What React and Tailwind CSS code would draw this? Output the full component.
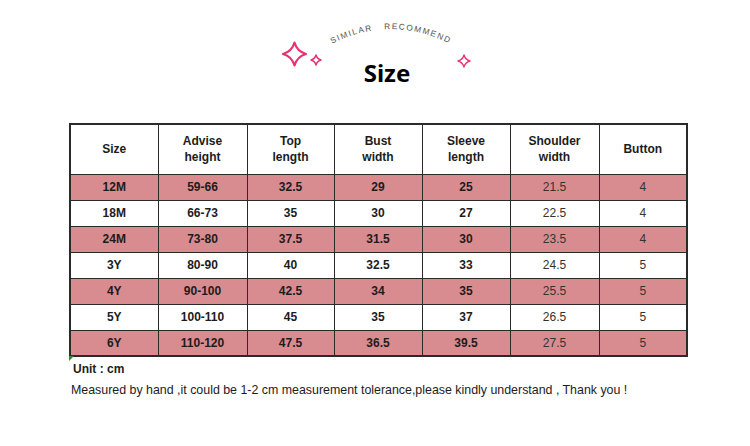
import React from "react";

const rows = [
  ["12M", "59-66", "32.5", "29", "25", "21.5", "4"],
  ["18M", "66-73", "35", "30", "27", "22.5", "4"],
  ["24M", "73-80", "37.5", "31.5", "30", "23.5", "4"],
  ["3Y", "80-90", "40", "32.5", "33", "24.5", "5"],
  ["4Y", "90-100", "42.5", "34", "35", "25.5", "5"],
  ["5Y", "100-110", "45", "35", "37", "26.5", "5"],
  ["6Y", "110-120", "47.5", "36.5", "39.5", "27.5", "5"],
];

const headers = [
  ["Size"],
  ["Advise", "height"],
  ["Top", "length"],
  ["Bust", "width"],
  ["Sleeve", "length"],
  ["Shoulder", "width"],
  ["Button"],
];

const colW = ["w-[88px]", "w-[89px]", "w-[87px]", "w-[88px]", "w-[88px]", "w-[89px]", "w-[88px]"];

function Sparkle({ cx, cy, r, sw }) {
  const k = r * 0.22;
  const d = `M ${cx} ${cy - r} Q ${cx + k} ${cy - k} ${cx + r} ${cy} Q ${cx + k} ${cy + k} ${cx} ${cy + r} Q ${cx - k} ${cy + k} ${cx - r} ${cy} Q ${cx - k} ${cy - k} ${cx} ${cy - r} Z`;
  return <path d={d} fill="none" stroke="#e8336f" strokeWidth={sw} strokeLinejoin="round" />;
}

export default function App() {
  return (
    <div className="w-[750px] h-[446px] bg-white overflow-hidden" style={{ fontFamily: '"Liberation Sans", Arial, sans-serif' }}>
      <div className="relative h-[123px]">
        <svg className="absolute inset-0" width="750" height="123" viewBox="0 0 750 123">
          <defs>
            <path id="arc" d="M 326 47 Q 391 11 456 47" fill="none" />
          </defs>
          <text fontSize="8.2" fill="#505050" letterSpacing="1.5" fontFamily='"Liberation Sans", Arial, sans-serif'>
            <textPath href="#arc" startOffset="50%" textAnchor="middle" xmlSpace="preserve">SIMILAR   RECOMMEND</textPath>
          </text>
          <Sparkle cx={294.5} cy={54} r={11.5} sw={2.2} />
          <Sparkle cx={316} cy={60} r={5} sw={1.5} />
          <Sparkle cx={464} cy={61} r={6} sw={1.3} />
        </svg>
        <div className="relative pt-[57px] pl-[24px] text-center text-[24px] font-bold text-black leading-[32px]" style={{ fontFamily: '"Noto Sans", sans-serif' }}>
          Size
        </div>
      </div>

      <div className="relative ml-[69px] w-[618px]">
        <table className="border-collapse border-2 border-[#2a2a2a] table-fixed w-[618px] text-[12px] text-[#1c1c1c]">
          <thead>
            <tr className="h-[50px] bg-white">
              {headers.map((h, i) => (
                <th key={i} className={`${colW[i]} border border-[#2a2a2a] font-bold leading-[16px] text-center align-middle p-0`}>
                  {h.map((l, j) => (
                    <div key={j}>{l}</div>
                  ))}
                </th>
              ))}
            </tr>
          </thead>
          <tbody>
            {rows.map((r, ri) => (
              <tr key={ri} className={`h-[26px] ${ri % 2 === 0 ? "bg-[#d98c90]" : "bg-white"}`}>
                {r.map((c, ci) => (
                  <td
                    key={ci}
                    className={`border border-[#2a2a2a] text-center align-middle p-0 leading-[14px] ${ci < 5 ? "font-bold" : "font-normal text-[#333]"}`}
                  >
                    {c}
                  </td>
                ))}
              </tr>
            ))}
          </tbody>
        </table>
        <svg className="absolute left-0 bottom-[-5px]" width="6" height="6" viewBox="0 0 6 6">
          <path d="M0 0 L5 0 L0 5 Z" fill="#2e8b2e" />
        </svg>
      </div>

      <div className="pl-[73px] pt-[4px] text-[12px] font-bold text-[#1c1c1c] leading-[16px]">Unit : cm</div>
      <div className="pl-[71px] pt-[5px] text-[12.4px] text-[#1c1c1c] leading-[16px]">
        Measured by hand ,it could be 1-2 cm measurement tolerance,please kindly understand , Thank you !
      </div>
    </div>
  );
}
